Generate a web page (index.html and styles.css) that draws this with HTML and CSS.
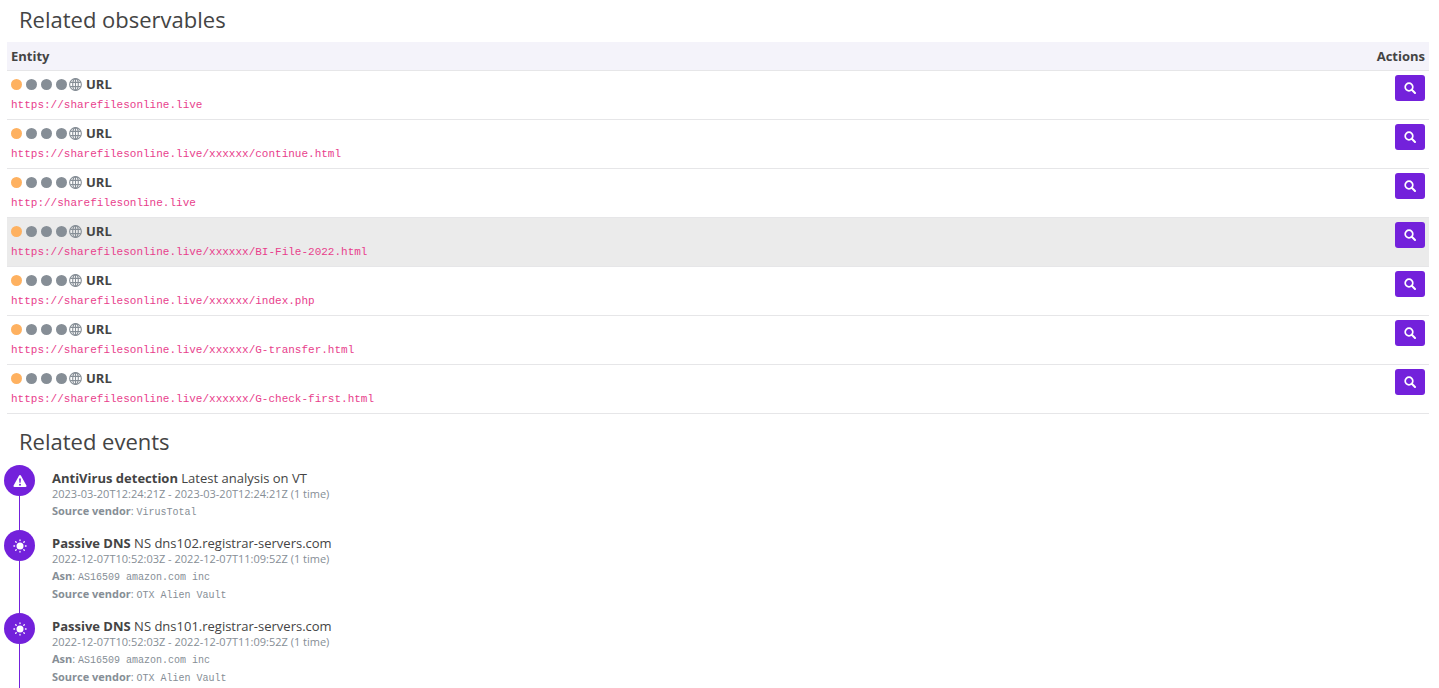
FILE: index.html
```html
<!DOCTYPE html>
<html lang="en">
<head>
<meta charset="utf-8">
<meta name="viewport" content="width=device-width, initial-scale=1">
<title>Related observables</title>
<link rel="stylesheet" href="styles.css">
</head>
<body>
<svg class="sprite" aria-hidden="true">
  <symbol id="globe" viewBox="0 0 14 14">
    <g fill="none" stroke="currentColor" stroke-width="1.2">
      <circle cx="7" cy="7" r="6.3"/>
      <ellipse cx="7" cy="7" rx="3" ry="6.3"/>
      <path d="M7 1v12M1.300 4.700h11.400M1.300 9.300h11.400"/>
    </g>
  </symbol>
  <symbol id="search" viewBox="0 0 12 12">
    <circle cx="5" cy="5" r="3.8" fill="none" stroke="currentColor" stroke-width="1.7"/>
    <path d="M7.8 7.8l3.2 3.2" stroke="currentColor" stroke-width="2" stroke-linecap="round"/>
  </symbol>
  <symbol id="warning" viewBox="0 0 14 14">
    <path fill="currentColor" fill-rule="evenodd" d="M7 1c.4 0 .7.2.9.5l5.5 10c.4.7 0 1.5-.8 1.5H1.400c-.8 0-1.200-.8-.8-1.500l5.500-10C6.300 1.200 6.600 1 7 1zM6.100 4.600l.3 4.200h1.200l.3-4.200zM7 9.700a1 1 0 1 0 0 2 1 1 0 0 0 0-2z"/>
  </symbol>
  <symbol id="sun" viewBox="0 0 14 14">
    <circle cx="7" cy="7" r="3.5" fill="currentColor"/>
    <path stroke="currentColor" stroke-width="1.3" stroke-linecap="round" d="M7 .9v.7M7 12.400v.7M.9 7h.7M12.400 7h.7M2.700 2.700l.5.5M10.800 10.800l.5.5M2.700 11.300l.5-.5M10.800 3.200l.5-.5"/>
  </symbol>
</svg>

<main class="page">
  <section>
    <h2 class="title">Related observables</h2>
    <table class="observables">
      <thead>
        <tr><th scope="col">Entity</th><th scope="col" class="actions">Actions</th></tr>
      </thead>
      <tbody>
        <tr>
          <td><div class="entity"><span class="dots"><i class="dot low"></i><i class="dot"></i><i class="dot"></i><i class="dot"></i></span><svg class="globe"><use href="#globe"/></svg><b>URL</b></div><code class="value">https://sharefilesonline.live</code></td>
          <td class="actions"><button class="search" type="button" aria-label="Search"><svg><use href="#search"/></svg></button></td>
        </tr>
        <tr>
          <td><div class="entity"><span class="dots"><i class="dot low"></i><i class="dot"></i><i class="dot"></i><i class="dot"></i></span><svg class="globe"><use href="#globe"/></svg><b>URL</b></div><code class="value">https://sharefilesonline.live/xxxxxx/continue.html</code></td>
          <td class="actions"><button class="search" type="button" aria-label="Search"><svg><use href="#search"/></svg></button></td>
        </tr>
        <tr>
          <td><div class="entity"><span class="dots"><i class="dot low"></i><i class="dot"></i><i class="dot"></i><i class="dot"></i></span><svg class="globe"><use href="#globe"/></svg><b>URL</b></div><code class="value">http://sharefilesonline.live</code></td>
          <td class="actions"><button class="search" type="button" aria-label="Search"><svg><use href="#search"/></svg></button></td>
        </tr>
        <tr class="active">
          <td><div class="entity"><span class="dots"><i class="dot low"></i><i class="dot"></i><i class="dot"></i><i class="dot"></i></span><svg class="globe"><use href="#globe"/></svg><b>URL</b></div><code class="value">https://sharefilesonline.live/xxxxxx/BI-File-2022.html</code></td>
          <td class="actions"><button class="search" type="button" aria-label="Search"><svg><use href="#search"/></svg></button></td>
        </tr>
        <tr>
          <td><div class="entity"><span class="dots"><i class="dot low"></i><i class="dot"></i><i class="dot"></i><i class="dot"></i></span><svg class="globe"><use href="#globe"/></svg><b>URL</b></div><code class="value">https://sharefilesonline.live/xxxxxx/index.php</code></td>
          <td class="actions"><button class="search" type="button" aria-label="Search"><svg><use href="#search"/></svg></button></td>
        </tr>
        <tr>
          <td><div class="entity"><span class="dots"><i class="dot low"></i><i class="dot"></i><i class="dot"></i><i class="dot"></i></span><svg class="globe"><use href="#globe"/></svg><b>URL</b></div><code class="value">https://sharefilesonline.live/xxxxxx/G-transfer.html</code></td>
          <td class="actions"><button class="search" type="button" aria-label="Search"><svg><use href="#search"/></svg></button></td>
        </tr>
        <tr>
          <td><div class="entity"><span class="dots"><i class="dot low"></i><i class="dot"></i><i class="dot"></i><i class="dot"></i></span><svg class="globe"><use href="#globe"/></svg><b>URL</b></div><code class="value">https://sharefilesonline.live/xxxxxx/G-check-first.html</code></td>
          <td class="actions"><button class="search" type="button" aria-label="Search"><svg><use href="#search"/></svg></button></td>
        </tr>
      </tbody>
    </table>
  </section>

  <section>
    <h2 class="title">Related events</h2>
    <ol class="timeline">
      <li class="event">
        <div class="rail"><span class="badge"><svg><use href="#warning"/></svg></span></div>
        <div class="details">
          <p class="name"><b>AntiVirus detection</b> Latest analysis on VT</p>
          <p class="time">2023-03-20T12:24:21Z - 2023-03-20T12:24:21Z (1 time)</p>
          <p class="attribute"><b>Source vendor</b>: <code>VirusTotal</code></p>
        </div>
      </li>
      <li class="event">
        <div class="rail"><span class="badge"><svg><use href="#sun"/></svg></span></div>
        <div class="details">
          <p class="name"><b>Passive DNS</b> NS dns102.registrar-servers.com</p>
          <p class="time">2022-12-07T10:52:03Z - 2022-12-07T11:09:52Z (1 time)</p>
          <p class="attribute"><b>Asn</b>: <code>AS16509 amazon.com inc</code></p>
          <p class="attribute"><b>Source vendor</b>: <code>OTX Alien Vault</code></p>
        </div>
      </li>
      <li class="event">
        <div class="rail"><span class="badge"><svg><use href="#sun"/></svg></span></div>
        <div class="details">
          <p class="name"><b>Passive DNS</b> NS dns101.registrar-servers.com</p>
          <p class="time">2022-12-07T10:52:03Z - 2022-12-07T11:09:52Z (1 time)</p>
          <p class="attribute"><b>Asn</b>: <code>AS16509 amazon.com inc</code></p>
          <p class="attribute"><b>Source vendor</b>: <code>OTX Alien Vault</code></p>
        </div>
      </li>
    </ol>
  </section>
</main>
</body>
</html>
```
FILE: styles.css
```css
* {
  box-sizing: border-box;
}

body {
  margin: 0;
  background: #fff;
  color: #444;
  font: 13px/20px "Open Sans", "Noto Sans", sans-serif;
}

code {
  font-family: "Liberation Mono", monospace;
}

.sprite {
  display: none;
}

.page {
  padding: 0 10px 0 7px;
}

.title {
  margin: 0;
  padding: 3px 12px 7px;
  font-size: 22px;
  font-weight: 400;
  line-height: 32px;
}

.observables {
  width: 100%;
  border-collapse: separate;
  border-spacing: 0;
  margin-bottom: 8px;
}

.observables th,
.observables td {
  padding: 4px;
  border-bottom: 1px solid #e6e6e8;
  text-align: left;
  vertical-align: top;
}

.observables th {
  background: #f4f3fa;
}

.observables .actions {
  text-align: right;
}

.observables .active td {
  background: #ebebeb;
}

.entity {
  display: flex;
  align-items: center;
  line-height: 18px;
}

.dots {
  display: flex;
  gap: 4px;
}

.dot {
  width: 11px;
  height: 11px;
  border-radius: 50%;
  background: #868e96;
}

.dot.low {
  background: #feb160;
}

.globe {
  width: 13px;
  height: 13px;
  margin: 0 4px 0 2px;
  color: #868e96;
}

.value {
  display: block;
  padding-top: 2px;
  color: #e83e8c;
  font-size: 11px;
}

.search {
  display: inline-flex;
  align-items: center;
  justify-content: center;
  width: 30px;
  height: 26px;
  padding: 0;
  border: 0;
  border-radius: 3px;
  background: #7321db;
  color: #fff;
  vertical-align: top;
}

.search svg {
  width: 12px;
  height: 12px;
}

.timeline {
  margin: 0;
  padding: 1px 0 0;
  list-style: none;
}

.event {
  display: flex;
  gap: 17px;
}

.rail {
  display: flex;
  flex-direction: column;
  align-items: center;
  width: 31px;
  margin-left: -3px;
}

.rail::after {
  content: "";
  flex: 1;
  width: 1px;
  background: #7321db;
}

.badge {
  display: flex;
  align-items: center;
  justify-content: center;
  width: 31px;
  height: 31px;
  border-radius: 50%;
  background: #7321db;
  color: #fff;
}

.badge svg {
  width: 14px;
  height: 14px;
}

.details {
  padding: 5px 0 10px;
}

.details p {
  margin: 0;
  line-height: 16px;
}

.details .time,
.details .attribute {
  color: #868e96;
  font-size: 11px;
}

.details .attribute {
  line-height: 18px;
}

.attribute code {
  font-size: 10px;
  line-height: 1;
}
```
